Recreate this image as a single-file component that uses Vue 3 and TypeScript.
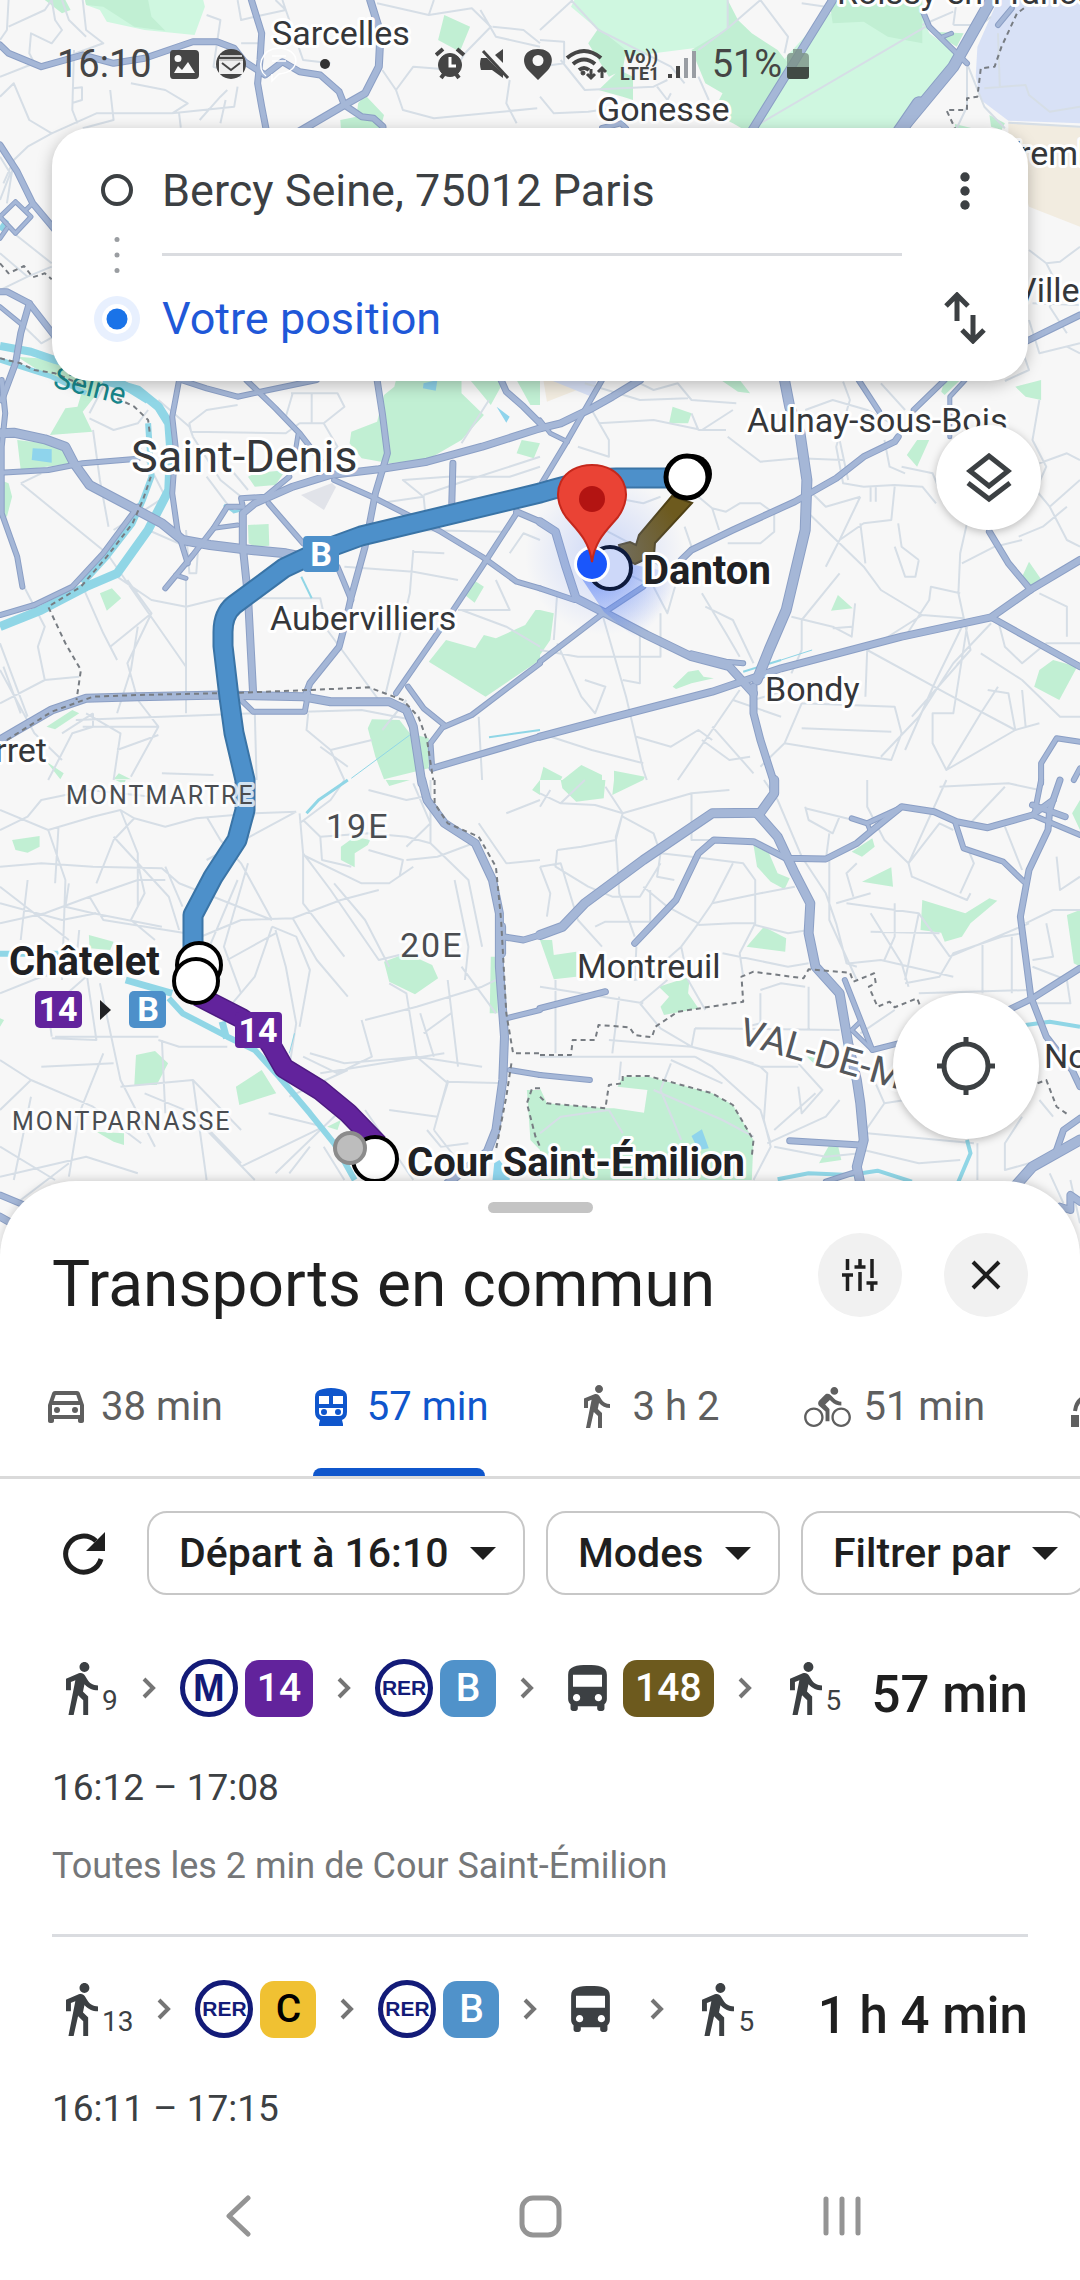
<script setup lang="ts">
import { ref } from 'vue'

interface Tile {
  x: number
  y: number
  parks: string[]
  meadows?: string[]
  airport?: string[]
  sand?: string[]
  ponds?: string[]
  rivers: [number, string][]
  streets: string[]
  highways: [number, string][]
  borders: string[]
}

/* Tile units: 1568 per 540px across, 3 per px down. */
const tiles: Tile[] = [
  {
    x: 0, y: 0,
    meadows: ['247,0 590,0 595,20 565,105 420,90 310,65 290,30 250,15'],
    parks: ['247,0 430,0 440,50 480,92 390,80 300,20 250,15', '130,0 190,0 205,30 180,40', '1290,45 1365,80 1335,155 1272,120', '1060,285 1115,345 1105,385 990,385 988,360 1035,350 1040,310', '50,1070 180,1080 300,1150 250,1200 230,1180 110,1110'],
    ponds: [],
    rivers: [[8, '0,1038 90,1055 160,1080 260,1110 360,1155 430,1200'], [5, '0,1080 90,1110 150,1130 250,1180'], [5, '0,690 20,660']],
    streets: ['25,80 130,30 150,0', '25,0 20,90 0,120', '150,0 160,60 180,90 150,130 90,100 85,160 100,190 0,230', '240,0 250,90 300,130 220,160 150,190', '180,0 200,60 250,110', '215,150 210,330 225,370', '212,265 238,262 238,300 212,308', '0,290 40,250 85,360 150,400 80,440 40,480 10,550', '150,400 280,340 500,340 545,310 480,270 380,250', '320,270 330,360 240,385', '600,45 640,60 620,200 700,230', '690,0 700,60 740,50', '700,130 750,130', '740,50 830,30 800,0', '820,0 830,30 880,180 960,190', '520,340 525,383', '500,340 680,320 690,260', '580,360 640,290 660,270', '640,370 655,300', '1095,10 1245,45 1260,0', '1245,45 1370,25 1425,80 1350,160 1320,210 1200,200 1150,270 1110,210', '1150,270 1170,330 1260,355 1560,325', '1395,30 1440,110 1568,140', '1430,80 1520,90 1568,130', '1480,240 1470,310 1500,370', '0,470 30,520 0,600', '40,480 20,610', '40,700 150,790', '0,760 80,830 0,870', '80,830 150,800', '65,975 120,1030 155,1010'],
    highways: [[6, '0,135 25,160 120,200 240,165 330,190 420,175 560,125 630,125 680,145 710,185 770,225 820,185 870,215 930,225 985,275 1000,315 1050,350 1085,355 1112,380 1112,420'], [6, '730,0 760,100 755,180 748,250 760,320 775,400'], [7, '1075,0 1105,100 1100,200 1060,280 1000,315 860,400'], [6, '0,435 50,515 95,610 160,690'], [4, '45,605 90,650 45,700 0,650 45,605'], [4, '95,610 75,630'], [4, '0,715 20,685'], [6, '0,875 20,875 85,910 160,1010'], [6, '85,910 60,1000 45,1090 5,1200'], [4, '0,920 65,975']],
    borders: ['0,790 25,820 70,798 95,832 130,820 150,838', '0,1075 60,1090 100,1110 160,1120 250,1160'],
  },
  {
    x: 540, y: 0,
    meadows: ['100,0 545,0 545,85 480,140 250,170 170,90 90,20', '720,165 830,40 1110,50 1130,100 1210,160 1110,330 1020,400 610,400 700,190'],
    parks: ['170,85 250,150 240,210 200,230 140,130', '545,0 575,60 615,100 690,150 720,190 610,400 560,370 500,340 530,280 480,250 440,150 545,85', '850,70 840,0 1110,0 1110,130 1010,110 940,65', '170,270 230,210 270,230 270,300 240,290', '1140,95 1230,100 1210,140', '1205,372 1255,385 1205,385', '1305,345 1350,370 1340,390 1310,380'],
    airport: ['1330,0 1568,0 1568,370 1360,362 1280,300 1265,230 1270,140'],
    sand: ['1360,365 1568,380 1568,680 1420,620 1360,400'],
    rivers: [],
    streets: ['0,120 70,125 70,190 0,200', '90,0 170,90 380,200 420,250', '0,90 95,0', '60,180 130,270 330,260 370,240', '0,290 40,340 140,335 240,320', '640,0 720,110 710,160', '460,150 545,85 640,0', '545,0 545,85', '1120,80 640,370', '760,10 830,20', '1110,75 1200,35', '1200,75 1280,75 1310,50', '1210,0 1200,75', '1240,200 1240,320 1210,385', '1330,100 1335,260', '1290,265 1410,255 1420,285 1480,335 1568,320', '1240,190 1290,320 1350,385', '1360,368 1568,380', '1420,750 1470,790 1510,785 1568,740', '1470,790 1510,870 1480,920 1530,1000', '1430,910 1568,915', '1420,960 1450,1060 1568,1030', '1530,1040 1568,1060', '1350,1143 1420,1110 1400,1050', '460,230 490,300', '340,260 370,300 380,280'],
    highways: [[8, '850,0 760,150 610,400'], [11, '1310,0 1200,200 1040,400'], [13, '1100,310 1040,400'], [5, '1110,30 1130,80 1190,140 1240,190'], [5, '1370,25 1330,75'], [4, '1195,100 1170,110'], [5, '180,384 235,370 250,385'], [6, '1568,945 1400,1030']],
    borders: ['1405,25 1385,40 1340,140 1320,200 1280,205 1270,290 1240,295 1240,330 1180,330 1205,385'],
  },
  {
    x: 0, y: 380,
    parks: ['145,165 190,85 225,80 245,10 290,30 240,95 268,155', '50,180 130,190 180,210 215,250 60,270', '0,300 25,310 35,350 20,410 0,400', '1115,45 1145,20 1150,0 1340,0 1340,40 1405,105 1340,180 1240,240 1130,250 1050,235 1015,190 1020,155 1095,125', '1365,0 1465,0 1425,75', '1500,0 1568,0 1568,75 1540,75', '1515,180 1568,190 1550,235 1500,220', '720,290 740,280 830,270 800,315 740,320', '720,435 780,432 782,497 740,500 722,490', '290,640 325,625 352,655 310,692', '1375,600 1405,620 1378,668 1350,645', '1295,780 1380,805 1405,765 1440,775 1525,735 1555,690 1568,690 1568,840 1410,950 1245,845', '135,1040 210,990 230,1000 160,1048', '1068,1045 1080,1018 1160,1020 1190,1060 1245,1075 1245,1165 1115,1198 1090,1130', '330,1198 345,1180 380,1198', '135,1145 185,1180 175,1198'],
    ponds: ['95,205 150,208 150,248 92,240', '1230,10 1270,0 1265,32 1228,25', '1442,80 1480,110 1470,128'],
    rivers: [[9, '300,0 400,30 460,80 490,130 495,200 490,330 430,450 340,580 250,620 120,690 0,740'], [6, '430,130 440,290 415,360 385,430 310,530 240,610'], [3, '650,375 680,395 720,385'], [2, '875,590 905,655'], [1, '1020,1195 1190,1065'], [2, '1420,1072 1500,1060 1568,1050']],
    streets: ['845,40 980,40 1000,80 940,130 870,130 830,160 555,155 550,130 600,90 690,75', '850,40 830,110', '905,40 905,130', '940,130 980,200 950,230', '460,60 550,140 560,170', '260,115 330,150 400,130 430,90', '270,150 290,300 315,440', '300,20 260,100', '60,310 310,520 540,860', '60,310 120,280', '400,190 480,350 330,450', '560,170 640,300 700,350', '600,290 680,400', '720,330 640,230', '430,450 540,500', '540,450 550,580 570,580 575,510', '340,590 440,660 540,680 640,655 930,655 950,750 1100,960', '370,600 440,700 320,800', '540,590 540,1000', '240,620 300,760 340,840', '70,620 130,740 110,800 130,900 0,970', '130,900 230,890', '400,740 380,870 340,1000', '440,700 370,850 400,960 460,1040', '0,790 80,1010', '10,860 60,1000', '0,870 100,1060 180,1140', '1200,510 1190,640 1120,940', '1200,515 1290,520', '1230,345 1330,310 1568,230', '1230,350 1235,400', '1100,370 1230,350 1170,300 1300,290 1480,290 1568,260', '1190,450 1460,455', '1000,560 1200,575 1330,600', '1440,600 1480,690 1330,690', '1340,690 1470,740 1568,800', '1480,520 1520,460 1568,480', '1420,60 1340,190', '220,1020 740,1000 1050,990 1200,1020', '270,1000 180,1060', '240,1040 460,1040 380,1190', '250,1000 350,1060 330,1200', '340,1110 460,1065', '740,1000 745,1200', '895,1000 890,1050 960,1110 1000,1200', '960,1110 1080,1080', '1180,960 1110,1050', '1390,1010 1400,1200', '270,1000 270,1040 210,1060 140,1200', '930,1100 1010,1160', '470,1180 620,1185'],
    highways: [[9, '0,160 40,158 130,178 190,200 215,250 260,315 370,375 470,430 530,480 610,495 710,508 830,520 880,530'], [5, '0,278 140,270 240,250 400,236'], [5, '5,0 15,100 5,200 5,400 50,530 65,620'], [5, '520,0 500,110 510,200 500,340 515,450 545,550'], [5, '525,0 600,25 690,50 780,30 920,0'], [5, '715,0 800,85 870,160 930,240'], [4, '865,165 855,230'], [6, '1095,0 1110,100 1125,220 1090,340 1060,500 1020,650 1000,740 985,800 900,910 885,950'], [7, '1568,145 1400,200 1240,245 1100,268 960,285 850,320 740,370 705,400 705,500 720,650 735,940'], [5, '840,290 770,350 700,355 705,380 660,380 620,445 560,525 480,625'], [4, '620,445 690,435'], [4, '510,585 540,595'], [5, '780,370 830,430 880,490 980,560 1020,660'], [5, '970,300 1080,350 1280,455 1400,530 1500,605 1568,625'], [6, '1315,250 1312,370'], [6, '1455,0 1470,35 1520,80 1568,130'], [8, '0,1080 50,1050 150,990 250,955 400,950 640,945 880,950 960,965 1130,965 1180,990 1200,1040 1225,1210'], [5, '700,960 735,995 885,995 895,940'], [5, '1500,400 1400,560 1290,730 1150,940'], [5, '1185,920 1230,985 1290,1035 1250,1090 1255,1165'], [5, '1290,1040 1370,1005 1568,850'], [6, '1255,1165 1568,1070'], [5, '0,705 100,675 210,620 300,520 400,380'], [6, '1500,395 1568,425']],
    borders: ['340,55 390,80 430,120 435,160', '438,290 415,360 385,430 310,530 235,620 140,680 190,790 235,870 222,960', '20,1080 150,995 270,950 400,945 700,938 900,930 1070,922 1170,960 1215,1010 1240,1080 1258,1200'],
  },
  {
    x: 540, y: 380,
    parks: ['375,130 385,80 440,100 430,130', '0,690 40,700 30,780 0,825', '385,920 430,875 460,870 475,890 505,895 440,910 395,927', '845,692 865,645 908,685', '525,0 580,0 610,40 575,35', '1065,225 1095,180 1130,180 1095,260', '1175,0 1220,0 1175,45 1165,35', '1380,20 1455,0 1455,60 1410,50', '1400,590 1420,545 1460,605 1420,630', '1450,870 1490,840 1560,860 1508,960 1435,920', '120,1155 180,1185 180,1200 65,1200', '215,1172 305,1190 300,1200 215,1200', '10,1160 65,1190 60,1200 0,1200'],
    airport: ['30,0 165,0 150,50'],
    sand: ['10,0 100,0 120,25 20,65'],
    rivers: [[2, '590,875 700,840'], [1, '700,840 790,810']],
    streets: ['130,10 290,60 430,55', '280,5 330,30 400,10 440,60 570,70', '170,130 330,120 470,150 560,90', '150,90 200,180 200,230 110,200', '440,100 460,150 540,150', '545,170 640,245 750,235 880,240', '500,385 540,395 580,370 640,370 680,400 680,455 640,490 545,490', '460,350 500,385 520,450', '420,440 440,500', '870,180 895,300', '770,90 850,60 950,90 1020,130', '990,10 1060,90', '1000,180 1015,260 1060,280', '880,5 900,60 860,200 880,310 940,320 1030,315 1110,320 1150,370', '790,340 830,380 930,350', '930,350 870,480 830,560', '960,320 960,365', '975,320 975,365', '1030,320 1020,420 940,430 870,480', '1040,430 1050,500 1100,540', '780,400 940,560 990,630 1110,705 1230,715', '930,430 945,550', '1100,540 1090,590 1060,590 1030,500', '1050,260 1140,280 1160,330 1240,430 1220,520 1215,640 1240,760 1250,810 1210,855', '1450,60 1430,180 1470,260 1440,330 1480,380 1568,300', '1450,250 1530,220 1568,240', '1390,470 1460,440 1530,380', '1225,550 1320,500 1400,480', '1480,380 1530,480 1568,500', '1220,640 1135,620 1130,660 1060,770', '1110,705 950,810 945,950', '915,670 905,770 850,740 730,710', '850,745 905,740', '730,880 760,810 760,720 870,580', '50,640 40,780', '180,700 250,950 300,1170 310,1200', '350,700 350,830 110,830 0,810', '290,765 290,910 240,900', '50,790 120,950 160,1000 190,920 130,900', '330,620 370,700 420,520', '480,680 560,720 620,850', '470,640 540,760 580,830', '280,1070 380,1100 460,1050 500,1080', '580,930 500,1050 400,1200', '500,1040 620,1180', '560,960 700,1010', '620,960 750,920 760,970 710,1090 830,1110 1020,1140 1050,1060 1030,980 760,970', '760,1045 1020,1055', '640,1160 710,1090', '950,810 1180,940 1380,1050 1450,1030', '1310,730 1200,850 1100,1010 990,1130', '1230,730 1150,900 1060,1110', '1250,810 1080,1010', '1280,820 1400,900 1510,1010 1568,1010', '1240,740 1200,1000 1140,1000 1140,1090 1180,1170 1280,1000 1330,920', '1300,930 1360,940 1380,1050 1180,1170', '1330,720 1350,800 1400,850 1470,790 1568,790', '1450,640 1530,680 1530,770', '1400,930 1410,1040', '0,1060 150,1110 300,1150', '470,1080 550,1140 610,1130', '200,350 300,370 350,350', '170,440 280,500 350,560', '210,560 330,620'],
    highways: [[7, '0,145 60,130 150,85 210,50 290,0'], [5, '180,0 130,90 75,190 5,310'], [4, '0,120 30,160 80,185'], [10, '710,0 725,80 755,160 775,300 770,450 715,690 665,810 630,900'], [7, '620,920 620,1000 640,1080 680,1210'], [5, '925,0 985,95'], [5, '1175,0 1085,90'], [4, '1235,0 1190,50 1190,170'], [6, '1040,170 1030,185 940,230 860,295 740,365 560,450 440,510 410,540'], [5, '300,620 190,695 0,845'], [8, '0,425 45,455 75,560 105,655 200,705 310,765 440,830 550,860 620,940'], [5, '440,820 540,845 590,850'], [5, '0,625 100,660'], [7, '0,1070 200,1015 500,935 700,865 1050,770 1310,712 1430,625 1568,540'], [6, '1305,455 1360,550 1425,630'], [6, '1310,712 1568,860'], [5, '1568,1085 1500,1075 1455,1150 1455,1210'], [5, '1568,1165 1550,1200']],
    borders: [],
  },
  {
    x: 0, y: 780,
    parks: ['35,180 115,168 115,200 80,218 45,210', '258,465 330,485 320,510 260,505', '395,825 450,813 488,850 455,915 390,915', '685,920 760,870 802,940 695,975', '280,1055 360,1060 360,1095 330,1085', '990,200 1030,170 1075,180 1068,195 1030,220 1030,262 990,240', '1115,545 1180,520 1255,555 1272,595 1205,643 1130,605', '1425,530 1445,530 1445,700 1422,700', '1120,0 1190,0 1130,18', '1545,30 1568,0 1568,45', '1530,930 1568,930 1568,1110 1540,1080', '0,715 12,720 0,740', '335,0 365,0 360,12', '950,1040 990,1020 980,1050'],
    ponds: ['1435,1150 1450,1140 1480,1180 1480,1200 1430,1200'],
    rivers: [[6, '0,521 170,521'], [7, '365,600 500,640'], [6, '490,655 530,700 660,770 740,810 810,890 900,1000 970,1090 1030,1200'], [7, '645,725 658,775'], [3, '890,100 925,60 1010,0'], [1, '840,820 855,760']],
    streets: ['0,90 140,150 270,110 350,90 390,115 480,140 570,115 740,100 860,95', '350,90 400,220 400,380', '390,115 330,180 280,310', '140,150 190,300 180,600', '0,150 80,110 120,60 260,30 440,50', '0,260 120,250 270,260 470,265 520,310 790,420', '170,140 160,310', '0,430 130,400 260,350 400,300 480,300', '0,370 180,420 280,400', '200,310 190,380 270,400 470,440', '260,350 300,420 540,460', '330,170 490,350 520,450', '400,250 420,340 380,420 450,480', '480,260 530,380', '600,110 640,180 700,250 790,420', '740,100 690,230', '870,100 880,220 880,370 1000,530', '860,95 600,240', '0,640 120,590 250,560 340,540', '150,770 140,690 250,590', '290,610 350,900 450,1100', '250,570 280,780 150,775', '160,770 320,770 460,770', '460,780 520,800 660,800', '470,780 480,1000', '0,840 90,900 270,980 410,1090', '120,860 330,850', '300,820 230,1000 200,1190', '90,950 40,1200', '90,900 0,990', '350,920 560,900 700,1050', '420,940 560,1000 700,1150', '560,900 600,1200', '650,700 740,590 790,440', '800,450 830,560 860,730 840,860', '790,440 860,470 900,570 870,740', '850,415 990,360 1100,330', '850,415 920,540 1010,650', '880,220 960,330 1100,540 1180,520', '880,120 930,170 935,240 1020,260', '930,170 1070,160 1180,170 1250,190', '880,225 1050,310 1130,310 1200,260', '1070,210 1170,240 1160,290', '1180,240 1270,230 1400,180', '1250,0 1250,190 1360,300 1400,500', '1200,10 1250,130 1180,200', '1130,560 1060,420 970,310', '1320,300 1360,500 1350,600', '1340,560 1440,700', '1060,720 1210,680 1400,620 1440,600', '1050,720 1080,830 980,880 880,830', '900,820 1000,850 1210,830 1400,860', '1210,830 1180,640 1130,610', '1210,830 1300,910 1270,1010 1130,990', '930,880 1290,820', '1300,905 1470,910', '1220,700 1260,830', '1300,900 1260,1050', '1060,990 1120,1080 1200,1200', '1240,1050 1280,1100 1360,1090', '1260,1050 1320,1130', '1300,600 1330,860', '840,950 1010,870', '780,1000 940,1040 800,1180', '700,1160 940,1040 1000,980', '940,1100 1000,1200', '600,1050 740,1200', '0,1100 160,1200', '0,1190 250,1130 400,1180', '200,1150 60,1260', '1000,0 960,60 870,130', '1070,30 1180,60 1230,50', '1470,100 1568,60', '1390,130 1470,250 1568,240', '1310,700 1230,760', '840,1180 900,1100', '720,250 650,500 700,640', '690,300 600,520 640,600', '560,480 700,420 850,415', '660,540 800,460', '0,320 200,480', '80,300 60,480', '230,450 220,560'],
    highways: [[8, '1225,0 1240,60 1290,130 1380,190 1430,300 1450,400 1450,560 1465,770 1460,900 1440,1050 1415,1115 1300,1210'], [6, '1460,470 1520,480 1568,465'], [5, '1470,715 1568,690'], [5, '1480,870 1568,885'], [6, '0,1245 70,1275'], [7, '0,1310 60,1345'], [9, '1455,440 1455,520']],
    borders: ['1262,0 1262,70 1300,130 1390,170 1440,260 1455,420 1470,700 1490,820 1568,820', '1485,850 1470,950 1440,1110', '1568,925 1545,925 1530,970 1555,1070 1568,1100'],
  },
  {
    x: 540, y: 780,
    parks: ['60,0 190,0 185,55 105,65 65,25', '215,0 300,0 210,45', '620,195 665,220 690,280 725,295 710,328 670,305 630,260', '600,500 650,440 715,475 712,515', '905,215 965,175 972,200 935,230', '935,305 1020,262 1025,320', '1110,360 1235,400 1305,355 1328,362 1250,430 1225,470 1175,485 1165,458 1105,450', '1530,405 1568,390 1568,560 1550,550', '1545,100 1568,60 1568,150', '0,480 35,480 40,525 105,515 105,590 40,598', '345,620 435,590 430,640 460,685 360,705 350,680 375,650', '0,925 20,970 190,985 215,985 302,998 312,930 225,920 240,890 315,890 500,940 560,975 620,1080 615,1200 0,1200', '840,1095 865,1095 875,1140 810,1150', '775,830 800,825 800,855'],
    ponds: ['440,1068 470,1048 490,1105 460,1110'],
    rivers: [[4, '690,1198 780,1180 900,1185 980,1172 1080,1205'], [4, '1240,1080 1250,1120 1215,1205'], [4, '1410,735 1480,725 1568,740']],
    streets: ['0,80 30,30', '60,70 160,75 240,100 220,170 230,340 275,470', '240,100 190,20', '240,100 440,40 550,30', '240,110 330,160 350,220 340,290 390,300', '0,40 60,70 130,0', '50,210 120,200 220,180 240,100', '50,210 45,260 140,320 210,350 290,350 350,250', '350,220 440,230 590,250 625,300 625,430 560,430 460,435', '440,40 440,180 520,180', '0,260 60,250 110,420 180,500', '0,260 30,340 20,410', '160,440 190,425 340,425', '300,320 370,380 460,430 410,500 310,590 275,600 280,500', '460,430 500,370 640,340 740,320', '320,330 320,430', '500,370 560,250', '625,430 580,520 590,590', '410,500 430,600 480,690', '625,435 720,460 780,450', '530,520 720,560 780,550', '650,0 690,60 760,230 830,340 860,430 890,550 920,560', '840,240 840,420 920,600', '860,370 960,340', '770,80 780,120 850,160 870,110', '770,85 910,120', '840,160 830,240', '950,0 950,80 1000,180 1070,250 1180,0', '1070,250 1080,290 1240,360 1250,340', '1070,250 1160,130 1200,150', '1240,200 1260,250 1220,340', '890,370 1100,400 1190,530', '910,350 890,280 920,250', '960,400 1050,550 1070,620', '1030,370 1030,470 1000,540', '1100,400 1060,600', '960,455 1160,460', '900,550 990,540 1200,590', '1060,610 1160,590 1200,520 1340,470 1400,460', '1190,530 1420,430', '1285,490 1285,640', '1370,470 1370,640', '1100,640 1420,630', '1160,20 1360,10 1450,30', '1350,140 1400,270', '1240,140 1350,20', '1410,430 1490,390 1568,390', '1430,540 1490,530 1470,430', '1500,230 1510,330 1568,290', '1430,560 1530,600 1540,670 1440,670', '45,600 45,820', '230,650 210,820', '200,780 440,800 560,830 640,860', '370,600 290,670 350,745 440,800 620,850', '450,745 870,750', '440,800 450,745', '640,860 750,860', '780,620 780,750', '640,860 660,880 650,1020 670,1100 620,1200', '660,1090 830,1010 870,960', '450,830 500,860 640,990 670,1090', '750,920 760,1000 820,930 750,850', '680,1050 800,940', '0,1060 60,1010 200,990', '200,990 240,1060', '350,930 410,1080', '330,930 530,1020 620,1070', '350,930 380,850', '235,845 230,900', '380,840 530,910', '0,830 220,830 450,830', '640,630 700,610 770,620', '640,640 640,730 600,740', '1030,690 930,760', '970,900 1000,970 940,1060', '950,1060 1260,1090', '940,1110 1100,1150 1220,1140', '1270,1090 1270,1200', '1400,1010 1350,1090 1350,1170 1420,1150', '1450,960 1490,1010', '680,1100 830,1130 930,1120', '1000,970 1060,960', '0,620 60,630 300,670', '1480,1180 1520,1270', '1540,1200 1568,1330'],
    highways: [[9, '0,465 65,440 130,370 300,240 500,100 640,98 680,40 680,0'], [6, '275,490 395,360 460,220 505,180 620,185 715,235 830,237 920,190 960,155 1050,80 1145,95 1210,125 1300,143 1430,105 1490,60'], [5, '905,115 950,130 1045,85'], [4, '950,130 960,155'], [9, '630,100 690,170 740,280 785,370 780,460 800,560 870,640 895,790 920,900 930,970 940,1080 920,1160 930,1210'], [5, '885,600 965,810 1060,785'], [4, '965,810 905,750 930,725'], [5, '1205,125 1230,205 1345,245 1405,305'], [6, '1510,0 1480,90 1475,150 1420,270 1395,410 1425,650 1470,770 1545,870 1568,920'], [5, '1455,0 1435,105'], [6, '1430,75 1525,110'], [5, '1430,105 1568,165'], [6, '1568,565 1430,655 1340,700'], [6, '0,685 190,635'], [5, '0,885 145,900'], [6, '725,1082 930,1095'], [10, '1370,1230 1430,1160 1568,1080'], [6, '1568,1015 1520,1050 1500,1110'], [5, '830,1205 920,1175'], [7, '1568,1265 1540,1245 1540,1290 1510,1280']],
    borders: ['0,825 90,825 95,780 160,780 170,735 260,742 275,765 325,772 335,740 400,695 590,665 585,590 620,575 765,595 780,568 900,578 910,605 970,580 975,610 955,620 980,680 1015,665 1030,682 1095,655 1105,680', '0,950 20,970 190,985 200,915 240,910 240,888 315,888 500,940 560,975 620,1080 615,1130', '1445,910 1470,900 1500,980 1535,1005'],
  },
]

function line(tile: Tile, points: string): string {
  return 'M' + points.split(' ').map((pair) => {
    const [px, py] = pair.split(',').map(Number)
    return `${Math.round((tile.x + px * 540 / 1568) * 10) / 10} ${Math.round((tile.y + py / 3) * 10) / 10}`
  }).join('L')
}

function areas(key: 'parks' | 'meadows' | 'airport' | 'sand' | 'ponds'): string {
  return tiles.map((t) => (t[key] ?? []).map((p) => line(t, p) + 'Z').join('')).join('')
}

function lines(key: 'streets' | 'borders'): string {
  return tiles.map((t) => t[key].map((p) => line(t, p)).join('')).join('')
}

const rivers = tiles.flatMap((t) => t.rivers.map(([w, p]) => ({ w, d: line(t, p) })))
const highways = tiles.flatMap((t) => t.highways.map(([w, p]) => ({ w, d: line(t, p) })))

const towns = [
  { name: 'Sarcelles', x: 272, y: 45 },
  { name: 'Gonesse', x: 597, y: 121 },
  { name: 'Roissy-en-France', x: 837, y: 4 },
  { name: 'Tremblay-en-France', x: 1000, y: 165 },
  { name: 'Villepinte', x: 1015, y: 302 },
  { name: 'Aulnay-sous-Bois', x: 747, y: 432 },
  { name: 'Aubervilliers', x: 270, y: 630 },
  { name: 'Bondy', x: 765, y: 701 },
  { name: 'Montreuil', x: 577, y: 978 },
  { name: 'Noisy-le-Grand', x: 1044, y: 1068 },
]

const origin = ref('Bercy Seine, 75012 Paris')
const destination = ref('Votre position')
const activeTab = ref('transit')

const tabs = [
  { id: 'car', label: '38 min' },
  { id: 'transit', label: '57 min' },
  { id: 'walk', label: '3 h 2' },
  { id: 'bike', label: '51 min' },
  { id: 'ride', label: '' },
]

const filters = [
  { id: 'depart', label: 'Départ à 16:10' },
  { id: 'modes', label: 'Modes' },
  { id: 'sort', label: 'Filtrer par' },
]

interface Leg {
  mode: 'walk' | 'metro' | 'rer' | 'bus'
  minutes?: string
  line?: string
  tone?: string
}

const routes: { legs: Leg[]; duration: string; times: string; note?: string }[] = [
  {
    legs: [
      { mode: 'walk', minutes: '9' },
      { mode: 'metro', line: '14', tone: 'violet' },
      { mode: 'rer', line: 'B', tone: 'blue' },
      { mode: 'bus', line: '148', tone: 'olive' },
      { mode: 'walk', minutes: '5' },
    ],
    duration: '57 min',
    times: '16:12 – 17:08',
    note: 'Toutes les 2 min de Cour Saint-Émilion',
  },
  {
    legs: [
      { mode: 'walk', minutes: '13' },
      { mode: 'rer', line: 'C', tone: 'yellow' },
      { mode: 'rer', line: 'B', tone: 'blue' },
      { mode: 'bus' },
      { mode: 'walk', minutes: '5' },
    ],
    duration: '1 h 4 min',
    times: '16:11 – 17:15',
  },
]

const walkPath = 'M13.5 5.5c1.1 0 2-.9 2-2s-.9-2-2-2-2 .9-2 2 .9 2 2 2zM9.8 8.9L7 23h2.1l1.8-8 2.1 2v6h2v-7.5l-2.1-2 .6-3C14.8 12 16.8 13 19 13v-2c-1.9 0-3.5-1-4.3-2.4l-1-1.6c-.4-.6-1-1-1.7-1-.3 0-.5.1-.8.1L6 8.3V13h2V9.6l1.8-.7'
</script>

<template>
  <div class="screen">
    <section class="map-area">
      <svg class="map" viewBox="0 0 1080 1254" preserveAspectRatio="xMidYMin slice" role="img" aria-label="Carte de l'itinéraire">
        <defs>
          <radialGradient id="beam" gradientUnits="userSpaceOnUse" cx="592" cy="564" r="86">
            <stop offset="0" stop-color="#3c6cf5" stop-opacity=".6" />
            <stop offset="1" stop-color="#3c6cf5" stop-opacity="0" />
          </radialGradient>
          <radialGradient id="glow" gradientUnits="userSpaceOnUse" cx="605" cy="555" r="80">
            <stop offset="0" stop-color="#7d9cf7" stop-opacity=".35" />
            <stop offset="1" stop-color="#7d9cf7" stop-opacity="0" />
          </radialGradient>
        </defs>
        <rect width="1080" height="1400" fill="#f7f7f7" />
        <path :d="areas('meadows')" fill="#cff7e0" />
        <path :d="areas('parks')" fill="#c1efd3" />
        <path :d="areas('sand')" fill="#f2ece0" />
        <path :d="areas('airport')" fill="#d8e1f6" />
        <path d="M301 495L332 483L336 487L324 510Z" fill="#e1e3e9" />
        <path class="street" :d="lines('streets')" />
        <path v-for="(r, i) in rivers" :key="'r' + i" class="river" :d="r.d" :stroke-width="r.w" />
        <path :d="areas('ponds')" fill="#8fd4ec" />
        <path v-for="(h, i) in highways" :key="'c' + i" class="casing" :d="h.d" :stroke-width="h.w + 1" />
        <path v-for="(h, i) in highways" :key="'h' + i" class="highway" :d="h.d" :stroke-width="h.w - 1" />
        <path class="border" :d="lines('borders')" />

        <g class="label">
          <text v-for="t in towns" :key="t.name" :x="t.x" :y="t.y">{{ t.name }}</text>
          <text x="47" y="762" text-anchor="end">Levallois-Perret</text>
          <text class="city" x="131" y="472">Saint-Denis</text>
        </g>
        <text class="water-name" transform="translate(52 387) rotate(14)">Seine</text>
        <text class="region" transform="translate(737 1043) rotate(16)">VAL-DE-MARNE</text>

        <g fill="none" stroke-linejoin="round">
          <path d="M688 478H616Q590 478 540 493L361 536L320 551L284 568L234 605Q223 614 223 632V646L229 697L234 733L245 780V810L237 840L213 877L193 915V960" stroke="#3a74a6" stroke-width="21" />
          <path d="M688 478H616Q590 478 540 493L361 536L320 551L284 568L234 605Q223 614 223 632V646L229 697L234 733L245 780V810L237 840L213 877L193 915V960" stroke="#4d90ca" stroke-width="17" />
          <path d="M198 996L241 1018L262 1032L272 1047L284 1068L320 1090L348 1113L378 1144" stroke="#4d1a80" stroke-width="21" />
          <path d="M198 996L241 1018L262 1032L272 1047L284 1068L320 1090L348 1113L378 1144" stroke="#62239c" stroke-width="18" />
        </g>
        <path d="M672 496L692 503L655 543L654 555L635 564L622 556L619 545L630 542L636 545L639 535Z" fill="#6d5a1e" stroke="#4f4013" stroke-width="2" />

        <g class="label district">
          <text x="66" y="804">MONTMARTRE</text>
          <text x="12" y="1130">MONTPARNASSE</text>
          <text class="big" x="326" y="838">19E</text>
          <text class="big" x="400" y="957">20E</text>
        </g>

        <circle cx="692" cy="474" r="20" fill="#000" />
        <circle cx="687" cy="477" r="21" fill="#fff" stroke="#000" stroke-width="5" />
        <g fill="#fff" stroke="#000" stroke-width="4">
          <circle cx="199" cy="965" r="22" />
          <circle cx="196" cy="981" r="22" />
          <circle cx="375" cy="1159" r="22" />
        </g>
        <circle cx="350" cy="1148" r="15" fill="#bdbdbd" stroke="#8b8b8b" stroke-width="4" />

        <circle cx="605" cy="555" r="80" fill="url(#glow)" />
        <path d="M580 576L604 612L650 650Q680 620 684 575L610 560Z" fill="url(#beam)" />
        <circle cx="610" cy="568" r="21" fill="#cdd8f9" stroke="#0d1a3d" stroke-width="4" />
        <circle cx="592" cy="564" r="18" fill="#fff" />
        <circle cx="592" cy="564" r="15" fill="#1a56fb" />
        <path d="M592 562C589 540 577 530 566 517C548 492 562 465 592 465S636 492 618 517C607 530 595 540 592 562Z" fill="#ea4335" stroke="#c5281c" stroke-width="2" />
        <circle cx="592" cy="499" r="13" fill="#b31412" />

        <g class="label station">
          <text x="643" y="584">Danton</text>
          <text x="9" y="975">Châtelet</text>
          <text x="407" y="1176">Cour Saint-Émilion</text>
        </g>
        <g class="tag">
          <rect x="303" y="536" width="36" height="36" rx="4" fill="#4d90ca" />
          <text x="321" y="566">B</text>
          <rect x="235" y="1012" width="47" height="36" rx="4" fill="#62239c" />
          <text x="258" y="1042">14</text>
          <rect x="35" y="991" width="47" height="37" rx="5" fill="#62239c" />
          <text x="58" y="1021">14</text>
          <rect x="129" y="991" width="37" height="37" rx="5" fill="#4d90ca" />
          <text x="148" y="1021">B</text>
          <path d="M100 1000L111 1010L100 1020Z" fill="#202124" />
        </g>
      </svg>

      <header class="status">
        <span>16:10</span>
        <svg class="notices" width="160" height="40" viewBox="0 0 160 40" aria-hidden="true">
          <path fill-rule="evenodd" fill="#454545" d="M3 6H25Q29 6 29 10V31Q29 35 25 35H3Q0 35 0 31V10Q0 6 3 6ZM4 29H25L18 18L12 26L8 22ZM8 11A3.500 3.500 0 1 0 8 18A3.500 3.500 0 1 0 8 11Z" />
          <circle cx="61" cy="20" r="15" fill="#454545" />
          <path d="M50 12H72M49 16H73" stroke="#f3f3f3" stroke-width="1.500" />
          <rect x="49" y="17" width="24" height="13" fill="#eee" />
          <path d="M52 19L61 26L70 19" fill="none" stroke="#454545" stroke-width="2" />
          <path d="M96 32C86 25 90 5 109 4C131 5 132 28 109 30L102 37V30" fill="none" stroke="#fff" stroke-width="1.500" />
          <path d="M102 12H116M102 17H116" stroke="#fff" stroke-width="1.500" />
          <circle cx="155" cy="20" r="5" fill="#333" />
        </svg>
        <svg class="signals" width="262" height="40" viewBox="0 0 262 40" aria-hidden="true">
          <g fill="#454545" stroke="#454545">
            <circle cx="15" cy="21" r="11.500" />
            <path d="M1 11L8 5M29 11L22 5M6 34L9 30M24 34L21 30" fill="none" stroke-width="4" />
            <path d="M15 13V22H21" fill="none" stroke="#fff" stroke-width="3" />
            <path d="M46 14H52L68 30V34L57 26H46Q44 20 46 14ZM60 11L68 5V19Z" stroke="none" />
            <path d="M48 7L73 34" fill="none" stroke-width="3" />
            <path fill-rule="evenodd" stroke="none" d="M103 5C88 5 86 18 93 26L103 36L113 26C120 18 118 5 103 5ZM103 11A5.500 5.500 0 1 1 103 22A5.500 5.500 0 1 1 103 11Z" />
            <g fill="none" stroke-width="4">
              <path d="M132 14Q149 0 166 14M138 20Q149 11 160 20M144 26Q149 22 154 26" />
              <path d="M156 25V34M152 30L156 34L160 30M167 34V24M163 28L167 24L171 28" stroke-width="3" />
            </g>
            <circle cx="148" cy="29" r="2" />
            <path d="M235 30V34M243 22V34" fill="none" stroke-width="4" />
            <path d="M251 14V34M259 7V34" fill="none" stroke="#999da3" stroke-width="4" />
            <g class="lte" stroke="none">
              <text x="189" y="19">Vo))</text>
              <text x="185" y="36">LTE1</text>
            </g>
          </g>
        </svg>
        <span class="percent">51%</span>
        <svg width="22" height="32" viewBox="0 0 22 32" aria-hidden="true">
          <path d="M6 1H15V5H18Q22 5 22 9V28Q22 31 19 31H3Q0 31 0 28V9Q0 5 4 5H6Z" fill="#7a9186" fill-opacity=".8" />
          <path d="M0 19H22V28Q22 31 19 31H3Q0 31 0 28Z" fill="#414a44" />
        </svg>
      </header>

      <form class="card" @submit.prevent>
        <div class="markers" aria-hidden="true">
          <svg width="46" height="46" viewBox="0 0 46 46"><circle cx="23" cy="23" r="14" fill="none" stroke="#3c4043" stroke-width="4" /></svg>
          <svg width="46" height="36" viewBox="0 0 46 36" fill="#9a9da1"><circle cx="23" cy="2.500" r="2.500" /><circle cx="23" cy="18" r="2.500" /><circle cx="23" cy="33.500" r="2.500" /></svg>
          <svg width="46" height="46" viewBox="0 0 46 46"><circle cx="23" cy="23" r="23" fill="#e8f0fe" /><circle cx="23" cy="23" r="15" fill="#fff" /><circle cx="23" cy="23" r="10.500" fill="#1a73e8" /></svg>
        </div>
        <div class="fields">
          <input v-model="origin" type="text" aria-label="Point de départ">
          <input v-model="destination" class="here" type="text" aria-label="Destination">
        </div>
        <div class="actions">
          <button type="button" aria-label="Plus d'options">
            <svg width="42" height="52" viewBox="0 0 42 52" fill="#3c4043"><circle cx="21" cy="12" r="4.700" /><circle cx="21" cy="26" r="4.700" /><circle cx="21" cy="40" r="4.700" /></svg>
          </button>
          <button type="button" aria-label="Inverser">
            <svg width="42" height="52" viewBox="0 0 42 52" fill="none" stroke="#3c4043" stroke-width="5"><path d="M13 29V4M2 14L13 3L24 14M29 23V48M18 38L29 49L40 38" /></svg>
          </button>
        </div>
      </form>

      <button class="fab layers" type="button" aria-label="Calques">
        <svg width="46" height="50" viewBox="0 0 46 50" fill="none" stroke="#3c4043" stroke-width="5"><path d="M23 3L42 18L23 33L4 18ZM2 30L23 46L44 30" /></svg>
      </button>
      <button class="fab locate" type="button" aria-label="Me localiser">
        <svg width="58" height="58" viewBox="0 0 58 58" fill="none" stroke="#3c4043" stroke-width="5"><circle cx="29" cy="29" r="22" /><path d="M29 0V8M29 50V58M0 29H8M50 29H58" /></svg>
      </button>
    </section>

    <main class="sheet">
      <div class="handle" />
      <div class="heading">
        <h1>Transports en commun</h1>
        <button type="button" aria-label="Options">
          <svg width="84" height="84" viewBox="0 0 84 84" fill="none" stroke="#1f1f1f" stroke-width="3.500"><path d="M29.500 26V37M24 42H35M29.500 42V58M42 26V34M36.500 34H47.500M42 39V58M54 26V45M48.500 50H59.500M54 50V58" /></svg>
        </button>
        <button type="button" aria-label="Fermer">
          <svg width="84" height="84" viewBox="0 0 84 84" fill="none" stroke="#1f1f1f" stroke-width="4"><path d="M29 29L55 55M55 29L29 55" /></svg>
        </button>
      </div>

      <nav class="tabs" role="tablist">
        <button v-for="tab in tabs" :key="tab.id" type="button" role="tab" :aria-label="tab.label || 'VTC'" :aria-selected="activeTab === tab.id" :class="{ active: activeTab === tab.id }" @click="activeTab = tab.id">
          <span class="tab-icon">
            <svg v-if="tab.id === 'car'" width="36" height="32" viewBox="3 5 18 16"><path fill-rule="evenodd" d="M18.920 6.010C18.720 5.420 18.160 5 17.500 5h-11c-.66 0-1.210.42-1.420 1.010L3 12v8c0 .55.45 1 1 1h1c.55 0 1-.45 1-1v-1h12v1c0 .55.45 1 1 1h1c.55 0 1-.45 1-1v-8l-2.080-5.990zM6.850 7h10.290l1.040 3H5.810l1.040-3zM19 17H5v-5h14v5z" /><circle cx="7.500" cy="14.500" r="1.500" /><circle cx="16.500" cy="14.500" r="1.500" /></svg>
            <svg v-else-if="tab.id === 'transit'" width="32" height="38" viewBox="0 0 32 38"><path fill-rule="evenodd" d="M8 1Q16-1 24 1Q32 2 32 9V24Q32 30 27 32L28 36V38H4V36L5 32Q0 30 0 24V9Q0 2 8 1ZM4 8V16H14V8ZM18 8V16H28V8ZM4 20V24Q4 28 8 28H24Q28 28 28 24V20Z" /><circle cx="9" cy="24" r="3" /><circle cx="23" cy="24" r="3" /></svg>
            <svg v-else-if="tab.id === 'walk'" width="26" height="43" viewBox="6 1.500 13 21.500"><path :d="walkPath" /></svg>
            <svg v-else-if="tab.id === 'bike'" width="47" height="40" viewBox="0 1.500 24 20.500"><path d="M15.500 5.500c1.100 0 2-.9 2-2s-.9-2-2-2-2 .9-2 2 .9 2 2 2zM5 12c-2.800 0-5 2.200-5 5s2.200 5 5 5 5-2.200 5-5-2.200-5-5-5zm0 8.800c-2 0-3.800-1.700-3.800-3.800s1.700-3.800 3.800-3.800 3.800 1.700 3.800 3.800-1.700 3.800-3.800 3.800zm5.800-10.300l2.400-2.400.8.8c1.300 1.300 3 2.100 5.100 2.100V9c-1.500 0-2.700-.6-3.600-1.500l-1.900-1.900c-.5-.4-1-.6-1.600-.6s-1.100.2-1.400.6L7.800 8.400c-.4.4-.6.9-.6 1.400 0 .6.2 1.100.6 1.400L11 14v5h2v-6.200l-2.200-2.300zM19 12c-2.800 0-5 2.200-5 5s2.200 5 5 5 5-2.200 5-5-2.200-5-5-5zm0 8.800c-2.100 0-3.800-1.700-3.800-3.800s1.700-3.800 3.800-3.800 3.800 1.700 3.800 3.800-1.700 3.800-3.800 3.800z" /></svg>
            <svg v-else width="47" height="40" viewBox="0 0 47 40"><path d="M5 24Q7 8 26 8" fill="none" stroke="#5f5f5f" stroke-width="4" /><rect x="1" y="28" width="8" height="12" /></svg>
          </span>
          <span>{{ tab.label }}</span>
        </button>
      </nav>

      <div class="filters">
        <button class="refresh" type="button" aria-label="Actualiser">
          <svg width="44" height="44" viewBox="0 0 44 44"><path d="M34 10A18 18 0 1 0 39 28" fill="none" stroke="#1f1f1f" stroke-width="5" /><path d="M43 1V20H24Z" fill="#1f1f1f" /></svg>
        </button>
        <label v-for="f in filters" :key="f.id" class="chip">
          <select :aria-label="f.label"><option>{{ f.label }}</option></select>
          <svg width="26" height="13" viewBox="0 0 26 13" aria-hidden="true"><path d="M0 0H26L13 13Z" fill="#1f1f1f" /></svg>
        </label>
      </div>

      <article v-for="route in routes" :key="route.times" class="route">
        <div class="summary">
          <template v-for="(leg, i) in route.legs" :key="i">
            <svg v-if="i" class="chevron" width="14" height="22" viewBox="0 0 14 22" aria-hidden="true"><path d="M2 2L11 11L2 20" fill="none" stroke="#757575" stroke-width="4" /></svg>
            <span class="leg">
              <template v-if="leg.mode === 'walk'">
                <svg class="walker" width="32" height="53" viewBox="6 1.500 13 21.500"><path :d="walkPath" fill="#3c4043" /></svg>
                <span class="minutes">{{ leg.minutes }}</span>
              </template>
              <span v-else-if="leg.mode === 'metro'" class="logo metro">M</span>
              <span v-else-if="leg.mode === 'rer'" class="logo">RER</span>
              <span v-else class="bus">
                <svg width="39" height="46" viewBox="4 2 16 19"><path fill="#3c4043" fill-rule="evenodd" d="M4 16c0 .88.39 1.670 1 2.220V20c0 .55.45 1 1 1h1c.55 0 1-.45 1-1v-1h8v1c0 .55.45 1 1 1h1c.55 0 1-.45 1-1v-1.780c.61-.55 1-1.340 1-2.220V6c0-3.500-3.580-4-8-4s-8 .5-8 4v10zm3.500 1c-.83 0-1.500-.67-1.500-1.500S6.670 14 7.500 14s1.500.67 1.500 1.500S8.330 17 7.500 17zm9 0c-.83 0-1.500-.67-1.500-1.500s.67-1.500 1.500-1.500 1.500.67 1.500 1.500-.67 1.500-1.500 1.500zm1.500-6H6V6h12v5z" /></svg>
              </span>
              <span v-if="leg.line" class="badge" :class="leg.tone">{{ leg.line }}</span>
            </span>
          </template>
          <strong>{{ route.duration }}</strong>
        </div>
        <p class="times">{{ route.times }}</p>
        <p v-if="route.note" class="note">{{ route.note }}</p>
      </article>

      <footer class="system">
        <button type="button" aria-label="Retour"><svg width="26" height="42" viewBox="0 0 26 42"><path d="M23 3L4 21L23 39" /></svg></button>
        <button type="button" aria-label="Accueil"><svg width="43" height="43" viewBox="0 0 43 43"><rect x="3" y="3" width="37" height="37" rx="11" /></svg></button>
        <button type="button" aria-label="Récents"><svg width="38" height="42" viewBox="0 0 38 42"><path d="M3 4V38M19 4V38M35 4V38" /></svg></button>
      </footer>
    </main>
  </div>
</template>

<style>
body {
  margin: 0;
  background: #fff;
}
</style>

<style scoped>
.screen {
  display: flex;
  flex-direction: column;
  min-height: 100vh;
  overflow: hidden;
  font-family: Roboto, "Liberation Sans", sans-serif;
  color: #1f1f1f;
}

button {
  padding: 0;
  border: 0;
  background: none;
  font: inherit;
  color: inherit;
  cursor: pointer;
}

svg {
  display: block;
  flex: none;
}

/* Map */
.map-area {
  position: relative;
  height: 55vh;
}

.map {
  position: absolute;
  inset: 0;
  width: 100%;
  height: 100%;
}

.street,
.river,
.casing,
.highway,
.border {
  fill: none;
  stroke-linejoin: round;
}

.street {
  stroke: #d6dee6;
  stroke-width: 2px;
}

.river {
  stroke: #90d6e6;
}

.casing {
  stroke: #8b9fc5;
  stroke-linecap: round;
}

.highway {
  stroke: #a5b7d7;
  stroke-linecap: round;
}

.border {
  stroke: #777c82;
  stroke-width: 2px;
  stroke-dasharray: 5 4;
}

.label text,
.region,
.water-name {
  font-size: 34px;
  fill: #35373a;
  stroke: #fff;
  stroke-width: 6px;
  stroke-linejoin: round;
  paint-order: stroke;
}

.label .city {
  font-size: 45px;
}

.water-name {
  font-size: 30px;
  fill: #17868b;
  stroke: none;
}

.region {
  font-size: 38px;
  fill: #55585c;
}

.district text {
  font-size: 25px;
  letter-spacing: 2px;
  fill: #4a4d51;
  stroke-opacity: .75;
}

.district .big {
  font-size: 34px;
}

.station text {
  font-size: 40px;
  font-weight: 700;
  fill: #202124;
}

.tag text {
  font-size: 34px;
  font-weight: 700;
  fill: #fff;
  text-anchor: middle;
}

/* Status bar */
.status {
  position: relative;
  display: flex;
  align-items: center;
  height: 128px;
  padding-left: 57px;
  font-size: 38px;
  line-height: 44px;
  color: #454545;
}

.notices {
  margin-left: 18px;
}

.signals {
  margin-left: 105px;
}

.percent {
  margin: 0 5px 0 15px;
}

.lte text {
  font-size: 18px;
  font-weight: 700;
}

/* Search card */
.card {
  position: relative;
  display: flex;
  margin: 0 52px;
  padding: 0 42px;
  border-radius: 38px;
  background: #fff;
  box-shadow: 0 4px 16px rgba(0, 0, 0, .25);
}

.markers {
  display: flex;
  flex-direction: column;
  justify-content: space-between;
  padding: 39px 0;
}

.fields {
  flex: 1;
  min-width: 0;
  margin: 0 42px 0 22px;
}

.fields input {
  display: block;
  box-sizing: border-box;
  width: 100%;
  height: 125px;
  padding: 0;
  border: 0;
  outline: 0;
  background: none;
  font: 400 45px Roboto, "Liberation Sans", sans-serif;
  color: #3c4043;
}

.fields .here {
  height: 128px;
  border-top: 3px solid #dadce0;
  color: #1f58d8;
}

.actions {
  display: flex;
  flex-direction: column;
  justify-content: space-between;
  padding: 37px 0;
}

.fab {
  position: absolute;
  display: flex;
  align-items: center;
  justify-content: center;
  border-radius: 50%;
  background: #fff;
  box-shadow: 0 2px 8px rgba(0, 0, 0, .25);
}

.layers {
  top: 425px;
  right: 39px;
  width: 105px;
  height: 105px;
}

.locate {
  right: 41px;
  bottom: 115px;
  width: 146px;
  height: 146px;
}

/* Bottom sheet */
.sheet {
  position: relative;
  display: flex;
  flex: 1;
  flex-direction: column;
  margin-top: -73px;
  padding-top: 21px;
  border-radius: 76px 76px 0 0;
  background: #fff;
  box-shadow: 0 -2px 8px rgba(0, 0, 0, .15);
}

.handle {
  width: 105px;
  height: 11px;
  margin: 0 auto;
  border-radius: 6px;
  background: #c4c4c4;
}

.heading {
  display: flex;
  align-items: flex-end;
  gap: 42px;
  margin: 20px 52px 0;
}

.heading h1 {
  flex: 1;
  margin: 0;
  font-size: 64px;
  font-weight: 400;
  line-height: 64px;
}

.heading button {
  border-radius: 50%;
  background: #f1f1f1;
}

.tabs {
  display: flex;
  gap: 85px;
  overflow: hidden;
  padding-left: 42px;
  border-bottom: 3px solid #dadada;
  font-size: 40px;
  color: #5f5f5f;
  white-space: nowrap;
}

.tabs button {
  position: relative;
  display: flex;
  flex: none;
  align-items: center;
  gap: 12px;
  height: 159px;
  padding-top: 20px;
  fill: currentColor;
}

.tab-icon {
  display: flex;
  justify-content: center;
  width: 47px;
}

.tabs .active {
  color: #0f56cc;
}

.tabs .active::after {
  content: "";
  position: absolute;
  right: 4px;
  bottom: 0;
  left: 5px;
  height: 8px;
  border-radius: 8px 8px 0 0;
  background: #0f56cc;
}

.filters {
  display: flex;
  align-items: center;
  gap: 21px;
  overflow: hidden;
  padding: 32px 0 21px 62px;
}

.refresh {
  flex: none;
  margin-right: 20px;
}

.chip {
  display: flex;
  flex: none;
  align-items: center;
  gap: 21px;
  box-sizing: border-box;
  height: 84px;
  padding: 0 27px 0 30px;
  border: 2px solid #c7c7c7;
  border-radius: 20px;
}

.chip select {
  appearance: none;
  padding: 0;
  border: 0;
  outline: 0;
  background: none;
  font: 500 41px Roboto, "Liberation Sans", sans-serif;
  color: #1f1f1f;
}

/* Routes */
.route {
  margin: 0 52px;
  padding: 43px 0 46px;
}

.route + .route {
  padding-bottom: 0;
  border-top: 3px solid #dadce0;
}

.summary {
  display: flex;
  align-items: center;
  gap: 24px;
  height: 58px;
}

.leg {
  display: flex;
  align-items: center;
}

.walker {
  margin: 0 4px 0 14px;
}

.minutes {
  align-self: flex-end;
  font-size: 28px;
  line-height: 28px;
  color: #3c4043;
}

.logo {
  display: flex;
  align-items: center;
  justify-content: center;
  box-sizing: border-box;
  width: 58px;
  height: 58px;
  margin-right: 7px;
  border: 5px solid #131b78;
  border-radius: 50%;
  font: 700 21px "Liberation Sans", sans-serif;
  color: #131b78;
}

.metro {
  font-size: 38px;
}

.bus {
  display: flex;
  justify-content: center;
  width: 58px;
  margin-right: 7px;
}

.badge {
  box-sizing: border-box;
  min-width: 56px;
  padding: 0 12px;
  border-radius: 14px;
  font-size: 39px;
  font-weight: 500;
  line-height: 57px;
  text-align: center;
  color: #fff;
}

.violet {
  background: #62239c;
}

.blue {
  background: #5092ca;
}

.olive {
  background: #6d5a1e;
}

.yellow {
  background: #f0c132;
  color: #000;
}

.summary strong {
  align-self: flex-end;
  margin-left: auto;
  font-size: 51px;
  font-weight: 500;
  line-height: 44px;
}

.times {
  margin: 47px 0 0;
  font-size: 37px;
  line-height: 48px;
  color: #3c4043;
}

.note {
  margin: 32px 0 0;
  font-size: 36px;
  line-height: 44px;
  color: #757779;
}

.system {
  display: flex;
  margin-top: auto;
  padding: 0 87px;
}

.system button {
  display: flex;
  flex: 1;
  align-items: center;
  justify-content: center;
  height: 128px;
  fill: none;
  stroke: #949494;
  stroke-width: 5px;
  stroke-linecap: round;
  stroke-linejoin: round;
}
</style>
